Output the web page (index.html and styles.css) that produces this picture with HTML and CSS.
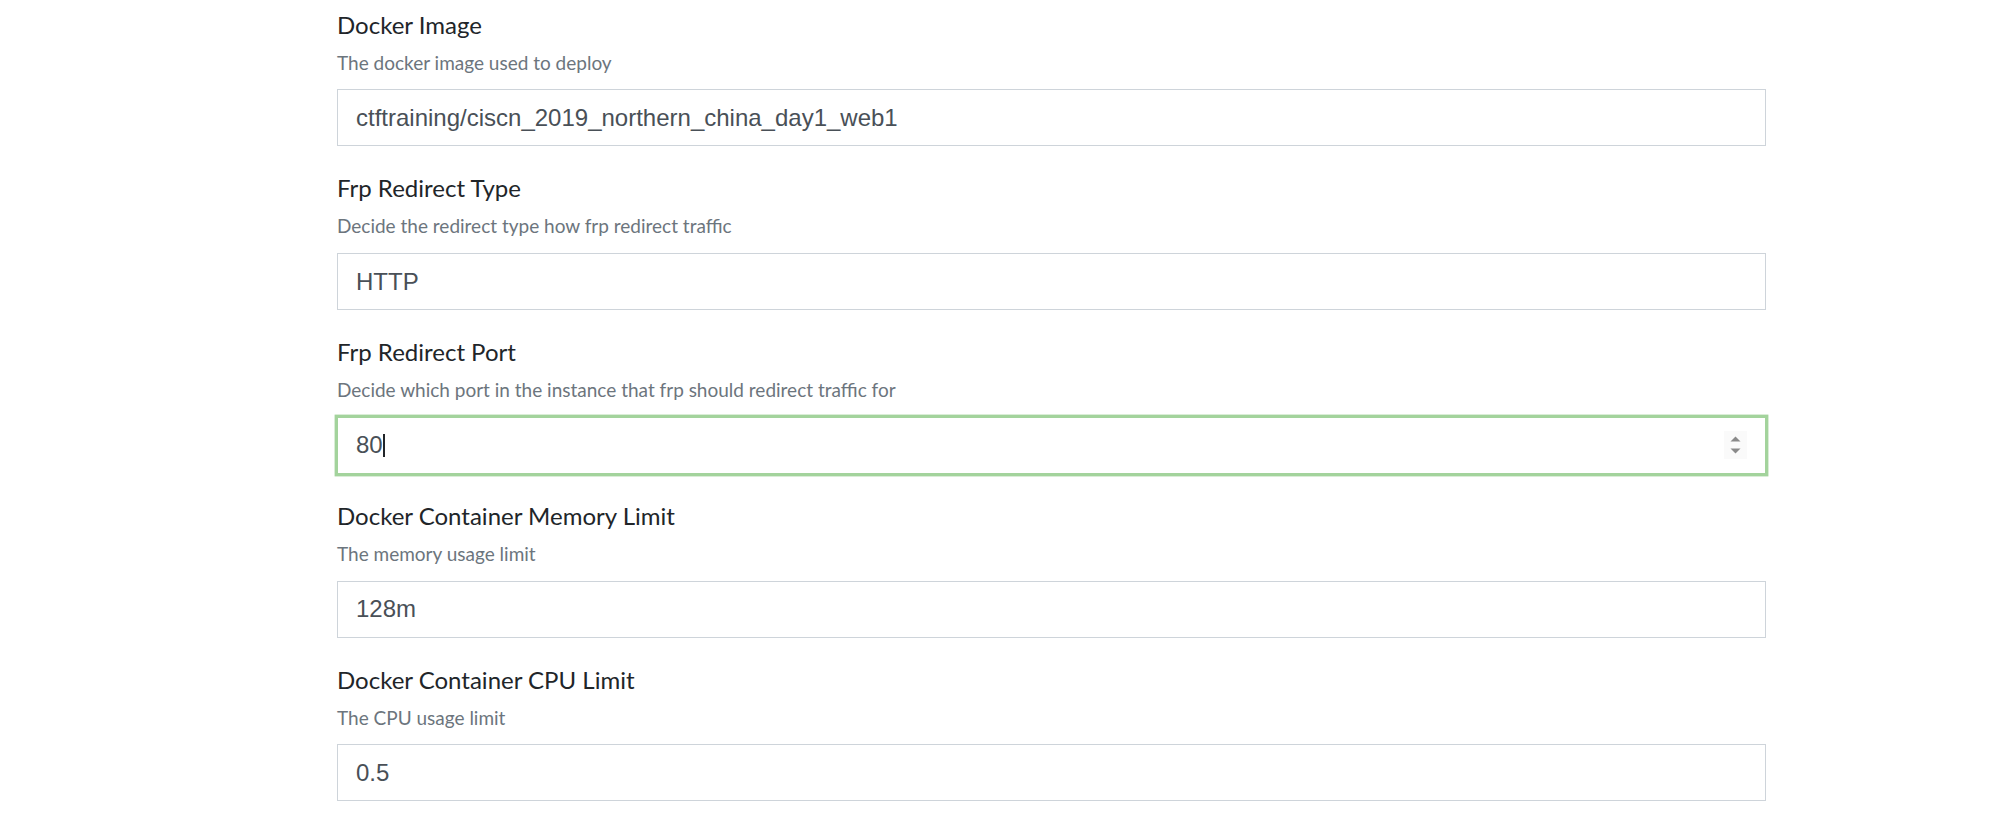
FILE: index.html
```html
<!DOCTYPE html>
<html lang="en">
<head>
<meta charset="utf-8">
<title>Challenge settings</title>
<link rel="stylesheet" href="styles.css">
</head>
<body>
<form class="settings">
  <div class="form-group">
    <label class="field-label">Docker Image<small class="form-text">The docker image used to deploy</small></label>
    <input class="form-control" type="text" value="ctftraining/ciscn_2019_northern_china_day1_web1">
  </div>
  <div class="form-group">
    <label class="field-label">Frp Redirect Type<small class="form-text">Decide the redirect type how frp redirect traffic</small></label>
    <input class="form-control" type="text" value="HTTP">
  </div>
  <div class="form-group">
    <label class="field-label">Frp Redirect Port<small class="form-text">Decide which port in the instance that frp should redirect traffic for</small></label>
    <div class="input-wrap">
      <input class="form-control is-focused" type="text" value="80">
      <span class="text-caret"></span>
      <span class="spinner">
        <svg width="23" height="28" viewBox="0 0 23 28"><rect width="23" height="28" fill="#fafafa"/><path d="M6.5 10.5 L11.5 5.5 L16.5 10.5 Z" fill="#8a8a8a"/><path d="M6.5 17.5 L11.5 22.5 L16.5 17.5 Z" fill="#8a8a8a"/></svg>
      </span>
    </div>
  </div>
  <div class="form-group">
    <label class="field-label">Docker Container Memory Limit<small class="form-text">The memory usage limit</small></label>
    <input class="form-control" type="text" value="128m">
  </div>
  <div class="form-group">
    <label class="field-label">Docker Container CPU Limit<small class="form-text">The CPU usage limit</small></label>
    <input class="form-control" type="text" value="0.5">
  </div>
</form>
</body>
</html>
```

FILE: styles.css
```css
html, body {
  margin: 0;
  padding: 0;
  background: #ffffff;
}

body {
  font-family: Lato, "Open Sans", sans-serif;
  color: #212529;
  overflow: hidden;
}

.settings {
  width: 1429px;
  margin-left: 337px;
  padding-top: 6.5px;
}

.form-group {
  margin-bottom: 24px;
}

.field-label {
  display: inline-block;
  margin-bottom: 12px;
  font-size: 24px;
  line-height: 36px;
  color: #212529;
}

.form-text {
  display: block;
  margin-top: 6px;
  font-size: 19px;
  line-height: 28.8px;
  color: #6c757d;
}

.form-control {
  display: block;
  box-sizing: border-box;
  width: 100%;
  height: 57px;
  margin: 0;
  padding: 9px 18px;
  font-family: "Liberation Sans", Arial, sans-serif;
  font-size: 24px;
  line-height: 36px;
  color: #495057;
  background: #ffffff;
  border: 1.5px solid #ced4da;
  border-radius: 0;
  outline: none;
}

.form-control.is-focused {
  border-color: #a3d39c;
  box-shadow: 0 0 0 2.4px #a3d39c;
  caret-color: transparent;
}

.input-wrap {
  position: relative;
}

.text-caret {
  position: absolute;
  left: 46px;
  top: 17px;
  width: 2px;
  height: 23px;
  background: #212529;
}

.spinner {
  position: absolute;
  right: 19px;
  top: 14.5px;
  width: 23px;
  height: 28px;
  display: block;
}

.spinner svg {
  display: block;
}
```
